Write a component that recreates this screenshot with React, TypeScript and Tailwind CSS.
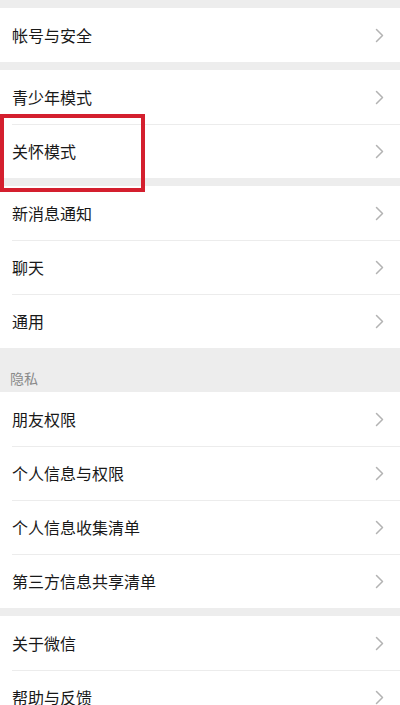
import React from "react";

const font = { fontFamily: '"Noto Sans CJK SC", "Noto Sans", sans-serif' };

function Chevron() {
  return (
    <svg width="9" height="15" viewBox="0 0 9 15" className="shrink-0">
      <path d="M1.5 1.5 L7.5 7.5 L1.5 13.5" fill="none" stroke="#b3b3b3" strokeWidth="1.5" strokeLinecap="round" strokeLinejoin="round" />
    </svg>
  );
}

function Row({ label, first }: { label: string; first?: boolean }) {
  return (
    <div className="relative flex h-[54px] items-center justify-between bg-white pl-3 pr-[16px]">
      {!first && <div className="absolute left-3 right-0 top-0 h-px bg-[#ececec]" />}
      <span className="text-[16px] leading-none text-[#191919]">{label}</span>
      <Chevron />
    </div>
  );
}

function Group({ items }: { items: string[] }) {
  return (
    <div className="bg-white">
      {items.map((t, i) => (
        <Row key={t} label={t} first={i === 0} />
      ))}
    </div>
  );
}

export default function App() {
  return (
    <div className="relative h-[705px] w-[400px] overflow-hidden bg-[#ededed]" style={font}>
      <div className="h-[8px]" />
      <Group items={["帐号与安全"]} />
      <div className="h-[8px]" />
      <Group items={["青少年模式", "关怀模式"]} />
      <div className="h-[8px]" />
      <Group items={["新消息通知", "聊天", "通用"]} />
      <div className="flex h-[44px] items-end pb-[7px] pl-[10px] text-[14px] leading-none text-[#8a8a8a]">隐私</div>
      <Group items={["朋友权限", "个人信息与权限", "个人信息收集清单", "第三方信息共享清单"]} />
      <div className="h-[8px]" />
      <Group items={["关于微信", "帮助与反馈"]} />
      <div className="absolute left-0 top-[114px] h-[78px] w-[145px] border-[4px] border-[#d41f2e]" />
    </div>
  );
}
